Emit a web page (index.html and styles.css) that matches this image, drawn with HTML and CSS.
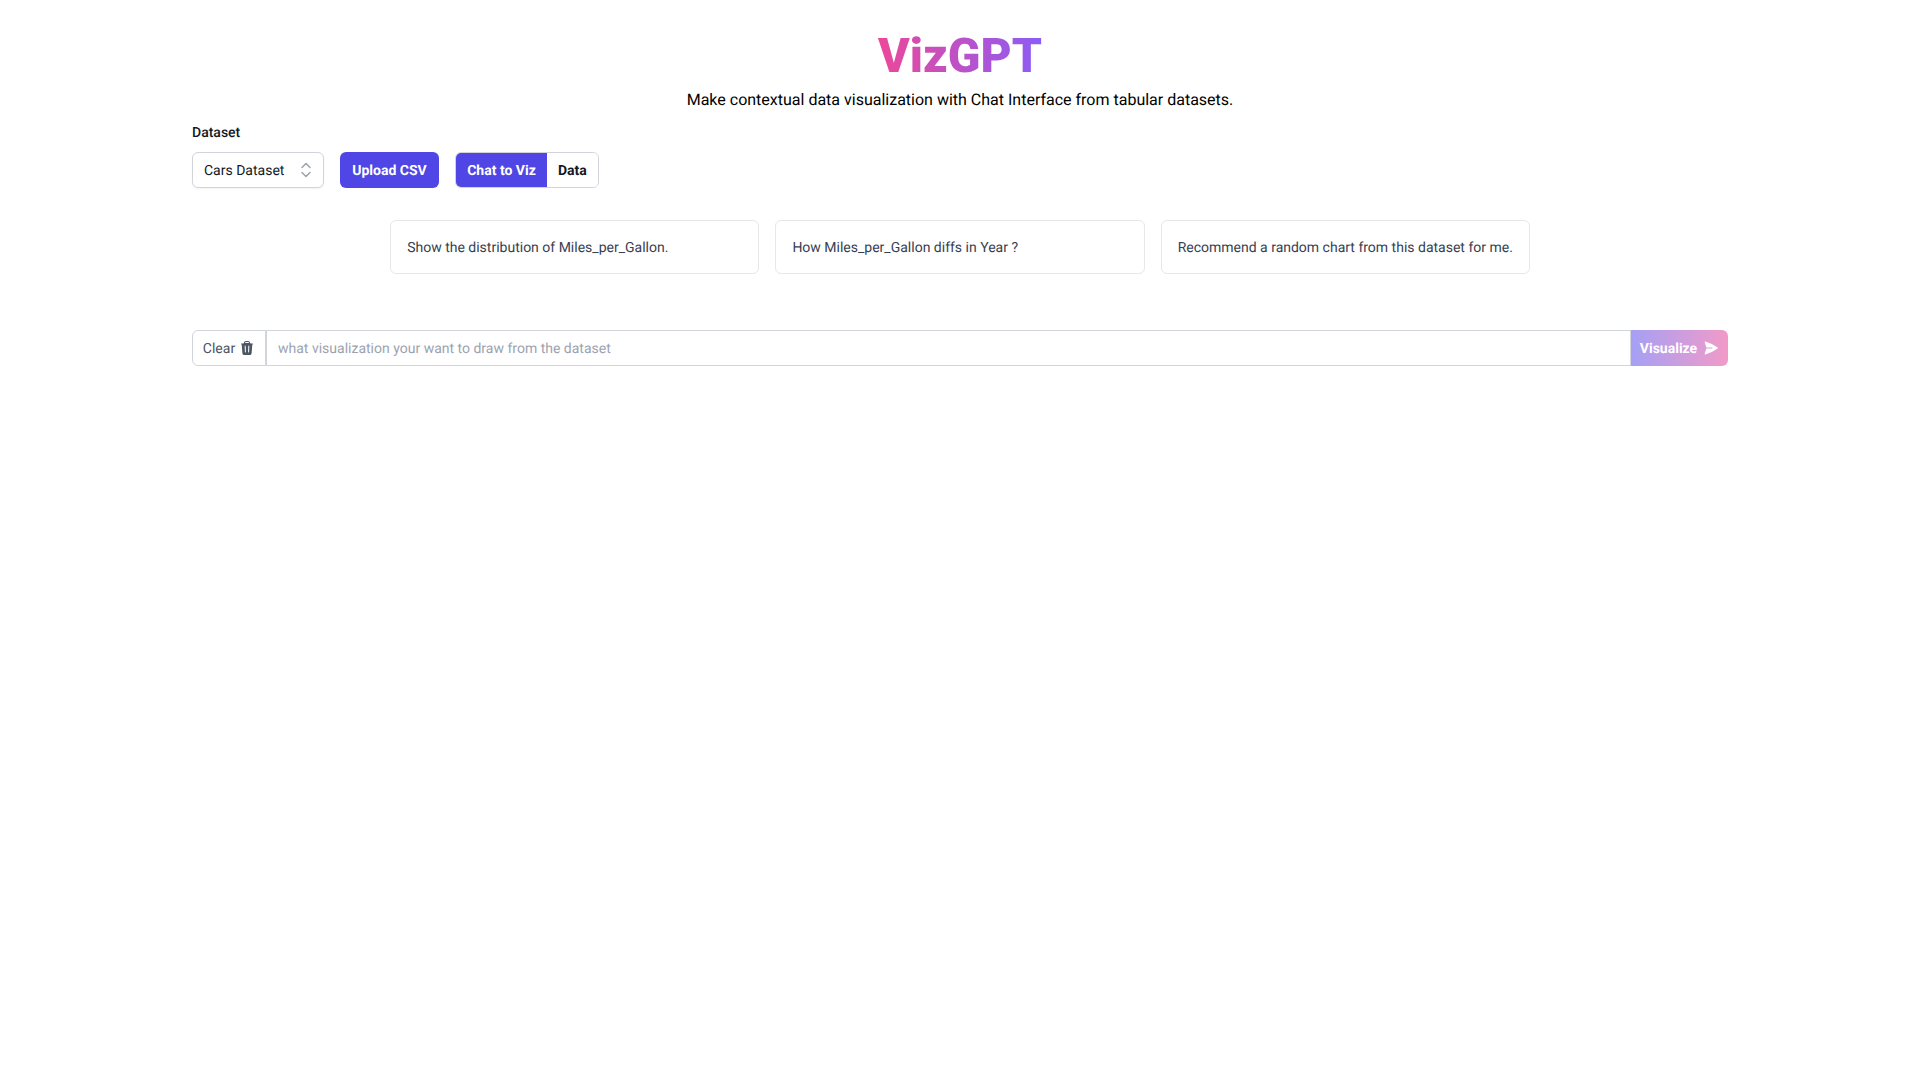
FILE: index.html
```html
<!DOCTYPE html>
<html lang="en">
<head>
<meta charset="utf-8">
<title>VizGPT</title>
<link rel="stylesheet" href="styles.css">
</head>
<body>
<main class="page">
  <header class="hero">
    <h1 class="title"><span class="title-grad">VizGPT</span></h1>
    <p class="subtitle">Make contextual data visualization with Chat Interface from tabular datasets.</p>
  </header>
  <section class="dataset">
    <label class="dataset-label">Dataset</label>
    <div class="toolbar">
      <button class="select">
        <span>Cars Dataset</span>
        <svg class="select-icon" viewBox="0 0 20 20" fill="none" stroke="#9ca3af" stroke-width="1.5" stroke-linecap="round" stroke-linejoin="round"><path d="M6 7.500 10 3.500l4 4"/><path d="M6 12.500l4 4 4-4"/></svg>
      </button>
      <button class="btn-primary">Upload CSV</button>
      <div class="tabs">
        <button class="tab tab-active">Chat to Viz</button>
        <button class="tab">Data</button>
      </div>
    </div>
  </section>
  <section class="cards">
    <div class="card">Show the distribution of Miles_per_Gallon.</div>
    <div class="card">How Miles_per_Gallon diffs in Year ?</div>
    <div class="card">Recommend a random chart from this dataset for me.</div>
  </section>
  <section class="chatbar">
    <button class="clear">Clear
      <svg class="clear-icon" viewBox="0 0 24 24" fill="#4b5563"><path fill-rule="evenodd" clip-rule="evenodd" d="M16.5 4.478v.227a48.816 48.816 0 013.878.512.75.75 0 11-.256 1.478l-.209-.035-1.005 13.07a3 3 0 01-2.991 2.77H8.084a3 3 0 01-2.991-2.77L4.087 6.66l-.209.035a.75.75 0 01-.256-1.478A48.567 48.567 0 017.5 4.705v-.227c0-1.564 1.213-2.9 2.816-2.951a52.662 52.662 0 013.369 0c1.603.051 2.815 1.387 2.815 2.951zm-6.136-1.452a51.196 51.196 0 013.273 0C14.39 3.05 15 3.684 15 4.478v.113a49.488 49.488 0 00-6 0v-.113c0-.794.609-1.428 1.364-1.452zm-.355 5.945a.75.75 0 10-1.5.058l.347 9a.75.75 0 101.499-.058l-.346-9zm5.48.058a.75.75 0 10-1.498-.058l-.347 9a.75.75 0 001.5.058l.345-9z"/></svg>
    </button>
    <div class="prompt">what visualization your want to draw from the dataset</div>
    <button class="visualize">Visualize
      <svg class="send-icon" viewBox="0 0 24 24" fill="#fff"><path d="M3.478 2.405a.75.75 0 00-.926.94l2.432 7.905H13.5a.75.75 0 010 1.500H4.984l-2.432 7.905a.75.75 0 00.926.94 60.519 60.519 0 0018.445-8.986.75.75 0 000-1.218A60.517 60.517 0 003.478 2.405z"/></svg>
    </button>
  </section>
</main>
</body>
</html>
```

FILE: styles.css
```css
* { box-sizing: border-box; }
html, body { margin: 0; padding: 0; background: #fff; }
body { font-family: Roboto, "Liberation Sans", sans-serif; color: #000; text-rendering: geometricPrecision; }
button { font-family: inherit; text-rendering: inherit; cursor: pointer; margin: 0; }
.page { width: 1536px; margin: 0 auto; padding-top: 26px; }
.hero { text-align: center; }
.title { margin: 0; font-size: 48px; line-height: 1; font-weight: 900; height: 62px; padding-top: 6px; }
.title-grad {
  background: linear-gradient(to right, #ec4899, #8b5cf6);
  -webkit-background-clip: text;
  background-clip: text;
  color: transparent;
}
.subtitle { margin: 0; font-size: 16px; line-height: 24px; height: 28px; color: #000; }
.dataset { margin-top: 4px; }
.dataset-label { display: block; padding-top: 1px; font-size: 14px; line-height: 24px; font-weight: 500; color: #111827; }
.toolbar { display: flex; align-items: center; gap: 16px; margin-top: 7px; }
.select {
  width: 132px; height: 36px; display: flex; align-items: center; justify-content: space-between;
  padding: 1px 11px 0; background: #fff; border: 1px solid #d1d5db; border-radius: 6px;
  font-size: 14px; color: #111827; box-shadow: 0 1px 2px rgba(0,0,0,.05);
}
.select-icon { width: 20px; height: 20px; margin-right: -4px; margin-top: -1px; }
.btn-primary {
  height: 36px; width: 99px; padding: 1px 0 0; background: #4f46e5; color: #fff; border: 0; border-radius: 6px;
  font-size: 14px; font-weight: 700;
}
.tabs { display: flex; height: 36px; border: 1px solid #d1d5db; border-radius: 6px; overflow: hidden; background: #fff; }
.tab { border: 0; background: #fff; color: #111827; font-size: 14px; font-weight: 700; padding: 1px 11px 0; }
.tab-active { background: #4f46e5; color: #fff; width: 91px; padding: 1px 0 0; }
.cards { display: grid; grid-template-columns: repeat(3, 1fr); width: max-content; gap: 16px; margin: 32px auto 0; }
.card {
  height: 54px; display: flex; align-items: center; padding: 1px 16px 0;
  border: 1px solid #e5e7eb; border-radius: 6px; font-size: 14px; color: #374151; white-space: nowrap;
}
.chatbar { display: flex; height: 36px; margin-top: 56px; }
.clear {
  width: 74px; display: flex; align-items: center; justify-content: center; gap: 4px;
  background: #fff; border: 1px solid #d1d5db; border-radius: 6px 0 0 6px; font-size: 14px; color: #4b5563; padding: 1px 0 0;
}
.clear-icon { width: 16px; height: 16px; margin-top: -1px; }
.prompt {
  flex: 1; display: flex; align-items: center; padding: 1px 11px 0;
  border: 1px solid #d1d5db; font-size: 14px; color: #9ca3af;
}
.visualize {
  width: 97px; display: flex; align-items: center; justify-content: center; gap: 6px; padding: 1px 0 0;
  border: 0; border-radius: 0 6px 6px 0; color: #fff; font-size: 14px; font-weight: 700;
  background: linear-gradient(to right, #a5a0f5, #f29ac8);
}
.send-icon { width: 16px; height: 16px; margin-top: -1px; }
```
